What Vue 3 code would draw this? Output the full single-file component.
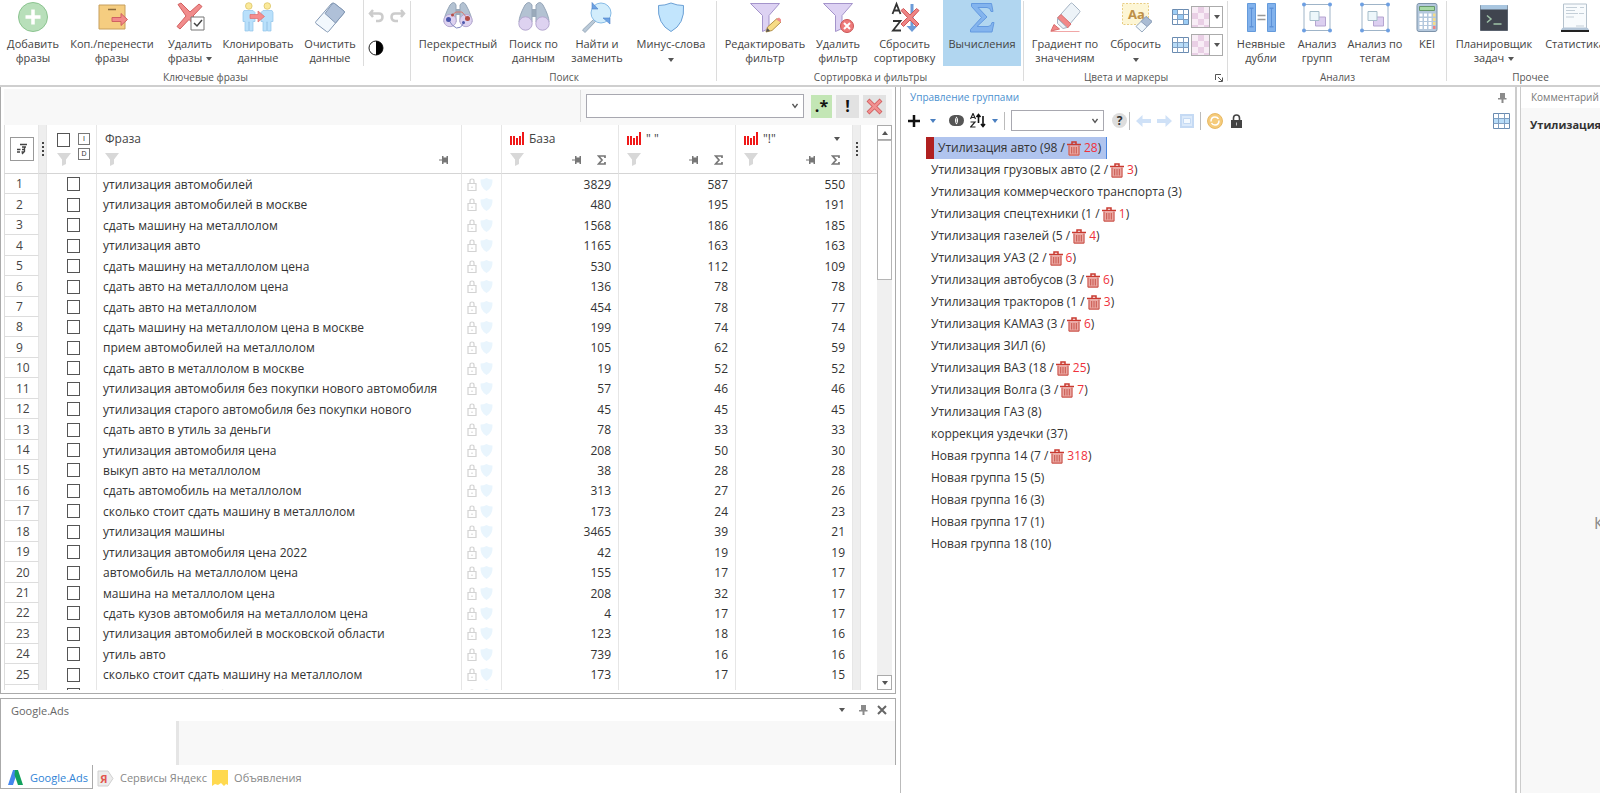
<script setup>
import { ref } from 'vue'

const icons = {
  add: '<circle cx="16" cy="16" r="14.5" fill="#b8dfba" stroke="#8cc490"/><path d="M16 8.500v15M8.500 16h15" stroke="#fff" stroke-width="3.500"/>',
  move: '<path d="M3 4h26v24H3z" fill="#f5cd80" stroke="#c79f5c"/><path d="M12 8.500h8" stroke="#8a6a3c" stroke-width="1.500"/><path d="M16 16.500h9v-4l6.500 6-6.500 6v-4h-9z" fill="#f28a8a" stroke="#cf6262"/>',
  remove: '<path d="M4 3.500 7 2l9 9 9-8 3 2.500-9 9.500 8 10-3 2.500-9-9-9 9.500-3-2.500 9-10.500z" fill="#f18c8c" stroke="#d25f5f"/><path d="M17 16h13v13H17z" fill="#fff" stroke="#777"/><path d="m20 22 3 3 5-6" fill="none" stroke="#444" stroke-width="1.500"/>',
  clone: '<g fill="#b9e0fb" stroke="#8fc3ea" stroke-width=".7"><path d="M2 9.500h9l2 2v9h-2V30H7.500v-9h-1v9H3v-9.500H1v-9z"/><path d="M21 9.500h9l1 2v9h-2V30h-3.500v-9h-1v9H21v-9.500h-2v-9z"/></g><g fill="#fbe99a" stroke="#dcc568" stroke-width=".8"><circle cx="6.800" cy="5" r="3.300"/><circle cx="25.300" cy="5" r="3.300"/></g><path d="M8 13.500h8v-3.500l6.500 5.500-6.500 5.500v-3.500H8z" fill="#f58d8d" stroke="#dd6b6b" stroke-width=".7"/>',
  eraser: '<path d="M20.500 2.500 30 10q1 1 0 2L14.500 30.500q-1 1-2 0L2 22.500q-1-1 0-2L17.500 2.500q1.500-1 3 0z" fill="#f2f8fd" stroke="#8297b3"/><path d="M20.500 2.500 30 10q1 1 0 2l-8.500 10L11 12.500l7-9.500q1.500-1 2.500-.5z" fill="#afc0d8" stroke="#8297b3"/>',
  binoc: '<path d="M13 8h6v8h-6z" fill="#9aaaba"/><path d="M7 4q4-5 7 0v17H1q0-6 6-17zM18 4q4-5 7 0 6 11 6 17H18z" fill="#b3c2d2" stroke="#95a5b8"/><circle cx="7.500" cy="22.500" r="6.700" fill="#ddd2f0" stroke="#b5a8d0"/><circle cx="24.500" cy="22.500" r="6.700" fill="#ddd2f0" stroke="#b5a8d0"/>',
  cross: '<path d="M13 8h6v6h-6z" fill="#9aaaba"/><path d="M8 4q4-5 6 0v17H2q0-6 6-17zM18 4q3-5 6 0 6 11 6 17H18z" fill="#b3c2d2" stroke="#95a5b8"/><circle cx="8" cy="19.500" r="6.200" fill="#ddd2f0" stroke="#b5a8d0"/><circle cx="24" cy="19.500" r="6.200" fill="#ddd2f0" stroke="#b5a8d0"/><path d="M10 14l4-3h6l5 6" fill="none" stroke="#d67a70"/><path d="M6 18q9 16 16 4" fill="none" stroke="#8088c0"/><circle cx="6.500" cy="18.500" r="2.500" fill="#4c57ac"/><circle cx="21.500" cy="21.500" r="1.500" fill="#4c57ac"/><circle cx="25.500" cy="17.500" r="2.500" fill="#b44d46"/><circle cx="10.500" cy="14" r="1.500" fill="#b44d46"/>',
  find: '<path d="m13 18 2 2L4 31.500 1.500 29z" fill="#b9c9d8" stroke="#9aabbb"/><circle cx="20" cy="12" r="10" fill="#d2edfc" stroke="#86bbe6"/><path d="M11 1.500v6.500h6zM22 17h7v6z" fill="#6da3e4" stroke="#4f82c8" stroke-width=".6"/>',
  shield: '<path d="M16 2q6 2.500 12.500 2.500Q30 23 16 30.500 2 23 3.500 4.500 10 4.500 16 2z" fill="#c2e5fd" stroke="#6ba0d5"/>',
  filterEdit: '<path d="M1.500 2.500h29L20 14.500v13l-6.500 3V14.500z" fill="#ddd2f3" stroke="#a494cb"/><path d="m17 31 1.500-5L28 17.500l4 3.500-9 8.500z" fill="#f7dc86" stroke="#b3924b"/><path d="m27 18.500 3-2 2 2v3z" fill="#ef8d8d"/><path d="m17 31 1.500-4 2.500 3z" fill="#555"/>',
  filterDel: '<path d="M1.500 2.500h29L20 14.500v13l-6.500 3V14.500z" fill="#ddd2f3" stroke="#a494cb"/><circle cx="25" cy="25" r="6.500" fill="#ee7a7a" stroke="#c95555"/><path d="m22 22 6 6m0-6-6 6" stroke="#fff" stroke-width="2"/>',
  sort: '<path d="M3.500 13 7.500 3l4 10M5 9.500h5M4 20h7.500L4 29.500h8" fill="none" stroke="#333" stroke-width="1.800"/><path d="M21.500 3h3v22h4L23 31l-5.500-6h4z" fill="#6c9bd8"/><path d="m12 9.500 2.500-2 6.500 6.500 6.500-6.500 2.500 2-6.500 7 6.500 6.500-2.500 2.500-6.500-6.500-6.500 6.500-2.500-2.500 6.500-6.500z" fill="#ee8585" stroke="#d05858"/>',
  sigma: '<path d="M5.500 2.500h20l1.500 8h-2q-.5-4-4-4h-9l9 9.500-10 9.500h11q3.500 0 4-4h2l-2 9.500H4.500v-2.500l11-12-10-11z" fill="#83b4ee" stroke="#649ae0"/>',
  marker: '<path d="M1.500 30.500h29" stroke="#f1a7a7"/><path d="M21.500 2.500q1-1 2 0l7 7q1 1 0 2L18 26.500 8.500 17z" fill="#edf3f8" stroke="#a4b3c3"/><path d="M12 13.500 22 23l-3.500 4L8.500 17z" fill="#f28888" stroke="#d86c6c"/><path d="M8.500 17.500 18 26.500l-4 1-5.500-5z" fill="#edf3f8" stroke="#a4b3c3"/><path d="M5 23.500 10.500 28 2 30z" fill="#f28888" stroke="#d86c6c"/>',
  reset: '<path d="M2.500 2.500h26v21h-26z" fill="#fdf6d5" stroke="#e8cd84" stroke-dasharray="2 1.500"/><text x="8" y="18" font-family="Noto Sans, sans-serif" font-size="13" font-weight="700" fill="#bd9047">Aa</text><path d="m26 15.500 6 5-10 10.500-6-5.500z" fill="#f0f7fc" stroke="#97a9be"/><path d="m26 15.500 6 5-5 5-6-5z" fill="#a9bcd4" stroke="#8ea1ba"/>',
  dup: '<path d="M2.500 2.500h8v28h-8zM22.500 2.500h8v28h-8z" fill="#82b2ec" stroke="#649adb"/><path d="M4.500 6.500h4v1.500h-1.500v17h1.500v1.500h-4v-1.500h1.500V8H4.500zM24.500 6.500h4v1.500h-1.500v17h1.500v1.500h-4v-1.500h1.500V8h-1.500z" fill="#5d91d8"/><path d="M12.500 14.500h8M12.500 18.500h8" stroke="#999" stroke-width="1.500"/>',
  group: '<path d="M3 3.500h26v26H3z" fill="#fff" stroke="#9fb4c8"/><path d="M14.500 16h10v9h-10z" fill="#dccff0" stroke="#b5a5d0"/><path d="M9 10.500h9v9H9z" fill="#edf7fb" stroke="#a5bdca"/><g fill="#6d9fe2"><circle cx="3" cy="3.500" r="2"/><circle cx="29" cy="3.500" r="2"/><circle cx="3" cy="29.500" r="2"/><circle cx="29" cy="29.500" r="2"/></g>',
  calc: '<rect x="6" y="2.500" width="20" height="28" rx="2" fill="#b4c8dd" stroke="#7d93aa"/><path d="M8.500 5.500h15v4h-15z" fill="#a7d9a5" stroke="#67986b"/><g fill="#fff"><path d="M8.500 12.500h3v3h-3zM13 12.500h3v3h-3zM17.500 12.500h3v3h-3zM8.500 17h3v3h-3zM13 17h3v3h-3zM17.500 17h3v3h-3zM8.500 21h3v3h-3zM13 21h3v3h-3zM17.500 21h3v3h-3zM8.500 25h3v3h-3zM13 25h3v3h-3zM17.500 25h3v3h-3z"/></g><path d="M22 12.500h2.500v3H22zM22 17h2.500v3H22zM22 21h2.500v3H22z" fill="#f5dc8a"/><path d="M22 25h2.500v3H22z" fill="#ee8484"/>',
  term: '<path d="M2.500 4.500h27v25h-27z" fill="#40454f" stroke="#5a626e"/><path d="M2.500 4h27v4.500h-27z" fill="#a9c6e0"/><path d="m9 14.500 4 3.500-4 3.500M15.500 23h8" fill="none" stroke="#9fc3a8" stroke-width="1.500"/>',
  stat: '<path d="M4.500 3h23v25.500h-23z" fill="#f8fbfd" stroke="#b5c2cd"/><path d="M7 6.500h11M7 9.500h9M7 12.500h12M7 16h8M21 6.500h4M20 12.500h5M17 25h8" stroke="#c4cfd8"/><path d="M2 30h28" stroke="#222" stroke-width="2"/><path d="M2 29q1-3 3-2.500h22q2-.5 3 2.500z" fill="#b4c6d8"/>',
}

const paneIcons = {
  pin: '<path d="M3 0h5v5h1.500v1.500H6.500V10h-2V6.500H1V5h2z" fill="#8b8b8b"/>',
  grid: '<path d="M.5.5h16v15H.5z" fill="#fff" stroke="#6a8bb0"/><path d="M1 5.500h15v5H1z" fill="#b8dcf8"/><path d="M.5 5.500h16M.5 10.500h16M5.500.5v15M11.500.5v15" stroke="#7f9fc2"/>',
  cells: '<path d="M.5.5h16v15H.5z" fill="#fff" stroke="#6a8bb0"/><path d="M1 1h5v5H1zM6 6h6v5H6zM12 11h4v4h-4z" fill="#9dcdf5"/><path d="M.5 5.500h16M.5 10.500h16M5.500.5v15M11.500.5v15" stroke="#7f9fc2"/>',
}

const ribbon = [
  { key: 'keys', title: 'Ключевые фразы', items: [['add', 'Добавить', 'фразы'], ['move', 'Коп./перенести', 'фразы'], ['remove', 'Удалить', 'фразы', true], ['clone', 'Клонировать', 'данные'], ['eraser', 'Очистить', 'данные']] },
  { key: 'search', title: 'Поиск', items: [['cross', 'Перекрестный', 'поиск'], ['binoc', 'Поиск по', 'данным'], ['find', 'Найти и', 'заменить'], ['shield', 'Минус-слова', '', true]] },
  { key: 'sorting', title: 'Сортировка и фильтры', items: [['filterEdit', 'Редактировать', 'фильтр'], ['filterDel', 'Удалить', 'фильтр'], ['sort', 'Сбросить', 'сортировку'], ['sigma', 'Вычисления', '']] },
  { key: 'colors', title: 'Цвета и маркеры', items: [['marker', 'Градиент по', 'значениям'], ['reset', 'Сбросить', '', true]] },
  { key: 'analysis', title: 'Анализ', items: [['dup', 'Неявные', 'дубли'], ['group', 'Анализ', 'групп'], ['group', 'Анализ по', 'тегам'], ['calc', 'KEI', '']] },
  { key: 'other', title: 'Прочее', items: [['term', 'Планировщик', 'задач', true], ['stat', 'Статистика', '']] },
]

const rows = [
  ['утилизация автомобилей', 3829, 587, 550],
  ['утилизация автомобилей в москве', 480, 195, 191],
  ['сдать машину на металлолом', 1568, 186, 185],
  ['утилизация авто', 1165, 163, 163],
  ['сдать машину на металлолом цена', 530, 112, 109],
  ['сдать авто на металлолом цена', 136, 78, 78],
  ['сдать авто на металлолом', 454, 78, 77],
  ['сдать машину на металлолом цена в москве', 199, 74, 74],
  ['прием автомобилей на металлолом', 105, 62, 59],
  ['сдать авто в металлолом в москве', 19, 52, 52],
  ['утилизация автомобиля без покупки нового автомобиля', 57, 46, 46],
  ['утилизация старого автомобиля без покупки нового', 45, 45, 45],
  ['сдать авто в утиль за деньги', 78, 33, 33],
  ['утилизация автомобиля цена', 208, 50, 30],
  ['выкуп авто на металлолом', 38, 28, 28],
  ['сдать автомобиль на металлолом', 313, 27, 26],
  ['сколько стоит сдать машину в металлолом', 173, 24, 23],
  ['утилизация машины', 3465, 39, 21],
  ['утилизация автомобиля цена 2022', 42, 19, 19],
  ['автомобиль на металлолом цена', 155, 17, 17],
  ['машина на металлолом цена', 208, 32, 17],
  ['сдать кузов автомобиля на металлолом цена', 4, 17, 17],
  ['утилизация автомобилей в московской области', 123, 18, 16],
  ['утиль авто', 739, 16, 16],
  ['сколько стоит сдать машину на металлолом', 173, 17, 15],
  ['утилизация автомобилей', 49, 17, 15],
]
const numCols = ['База', '" "', '"!"']

const groups = [
  ['Утилизация авто', 98, 28], ['Утилизация грузовых авто', 2, 3], ['Утилизация коммерческого транспорта', 3],
  ['Утилизация спецтехники', 1, 1], ['Утилизация газелей', 5, 4], ['Утилизация УАЗ', 2, 6],
  ['Утилизация автобусов', 3, 6], ['Утилизация тракторов', 1, 3], ['Утилизация КАМАЗ', 3, 6],
  ['Утилизация ЗИЛ', 6], ['Утилизация ВАЗ', 18, 25], ['Утилизация Волга', 3, 7], ['Утилизация ГАЗ', 8],
  ['коррекция уздечки', 37], ['Новая группа 14', 7, 318], ['Новая группа 15', 5], ['Новая группа 16', 3],
  ['Новая группа 17', 1], ['Новая группа 18', 10],
]
const selected = ref(0)
</script>

<template>
  <div class="app">
    <header class="ribbon">
      <section v-for="g in ribbon" :key="g.key" class="rgroup" :class="g.key">
        <div class="tools">
          <button v-for="(it, i) in g.items" :key="i" class="tool" :class="{ active: it[0] === 'sigma' }">
            <svg class="big" viewBox="0 0 32 32" v-html="icons[it[0]]"></svg>
            <span>{{ it[1] }}</span>
            <span>{{ it[2] }}<i v-if="it[3]" class="tri" :class="{ solo: !it[2] }"></i></span>
          </button>
          <div v-if="g.key === 'keys'" class="edit">
            <button class="mini" aria-label="Отменить"><svg width="16" height="14" viewBox="0 0 16 14"><path d="M5 1 2 4.500 5 8M2.500 4.500H11q3.500 0 3.500 3.500T11 12H8" fill="none" stroke="#ccc" stroke-width="2.500" /></svg></button>
            <button class="mini" aria-label="Повторить"><svg width="16" height="14" viewBox="0 0 16 14"><path d="m11 1 3 3.500L11 8m2.500-3.500H5Q1.500 4.500 1.500 8T5 12h3" fill="none" stroke="#ccc" stroke-width="2.500" /></svg></button>
            <button class="mini" aria-label="Контраст"><svg width="16" height="16" viewBox="0 0 16 16"><circle cx="8" cy="8" r="7" fill="#fff" stroke="#222" /><path d="M8 1a7 7 0 0 1 0 14z" /></svg></button>
          </div>
          <div v-if="g.key === 'colors'" class="swatches">
            <template v-for="k in ['cells', 'grid']" :key="k">
              <svg width="17" height="16" viewBox="0 0 17 16" v-html="paneIcons[k]"></svg>
              <button class="swatch" :aria-label="'Цвет ' + k"><b class="checker"></b><i class="tri"></i></button>
            </template>
          </div>
        </div>
        <div class="rtitle">{{ g.title }}
          <svg v-if="g.key === 'colors'" class="launch" width="8" height="8" viewBox="0 0 8 8"><path d="M.5 6V.5H6M3 3l4 4M7.500 3.500v4h-4" fill="none" stroke="#555" /></svg>
        </div>
      </section>
    </header>

    <main class="main">
      <div class="left">
        <section class="sheet">
          <div class="filterbar">
            <i class="vsep"></i>
            <select class="combo query" aria-label="Фильтр"><option></option></select>
            <button class="fbtn green">.*</button>
            <button class="fbtn">!</button>
            <button class="fbtn" aria-label="Сбросить фильтр"><svg width="17" height="17" viewBox="0 0 17 17"><path d="m2 2 13 13M15 2 2 15" stroke="#cf5757" stroke-width="4" /><path d="m2.500 2.500 12 12m0-12-12 12" stroke="#f19090" stroke-width="2.500" /></svg></button>
          </div>
          <div class="gridwrap">
            <div class="scrollarea">
              <table>
                <colgroup><col class="c-num"><col class="c-strip"><col class="c-chk"><col><col class="c-ico"><col class="c-val"><col class="c-val"><col class="c-val"><col class="c-strip"><col class="c-end"></colgroup>
                <thead>
                  <tr>
                    <th><button class="layout" aria-label="Столбцы"><svg width="12" height="12" viewBox="0 0 12 12"><path d="M4 1.500h7M6 4h4M1 6.500h3.500M6 6.500h3M1 9h3M8.500 4v4.500L6 11M5.500 9h2" fill="none" stroke="#444" stroke-width="1.300" /></svg></button></th>
                    <th class="strip"><i class="dots"></i></th>
                    <th>
                      <div class="hchk">
                        <input type="checkbox" aria-label="Выбрать все"><span class="flag">I</span>
                        <svg class="funnel" width="14" height="13" viewBox="0 0 14 13"><path d="M0 0h14L9 6.500V11l-4 2V6.500z" /></svg><span class="flag">D</span>
                      </div>
                    </th>
                    <th class="phrase">
                      <div class="hrow">Фраза</div>
                      <div class="hrow"><svg class="funnel" width="14" height="13" viewBox="0 0 14 13"><path d="M0 0h14L9 6.500V11l-4 2V6.500z" /></svg><svg class="hpin" width="10" height="8" viewBox="0 0 10 8"><path d="M0 3.500h3V0h1.500v1.500h3V0H9v8H7.500V6.500h-3V8H3V4.500H0z" /></svg></div>
                    </th>
                    <th></th>
                    <th v-for="(c, i) in numCols" :key="c" class="numh">
                      <div class="hrow"><svg width="14" height="13" viewBox="0 0 14 13"><path d="M1 4v9M4 4v9M7 6v7M10 4v9M13 0v13" stroke="#f01818" stroke-width="2" /></svg>{{ c }}<i v-if="i === 2" class="tri desc"></i></div>
                      <div class="hrow"><svg class="funnel" width="14" height="13" viewBox="0 0 14 13"><path d="M0 0h14L9 6.500V11l-4 2V6.500z" /></svg><svg class="hpin" width="10" height="8" viewBox="0 0 10 8"><path d="M0 3.500h3V0h1.500v1.500h3V0H9v8H7.500V6.500h-3V8H3V4.500H0z" /></svg><svg class="sum" width="9" height="10" viewBox="0 0 9 10"><path d="M8 3V1H1.500L5 5 1.500 9H8V7" fill="none" stroke="#777" stroke-width="1.700" /></svg></div>
                    </th>
                    <th class="strip"><i class="dots"></i></th>
                    <th></th>
                  </tr>
                </thead>
                <tbody>
                  <tr v-for="(r, i) in rows" :key="i">
                    <td class="idx">{{ i + 1 }}</td>
                    <td class="strip"></td>
                    <td class="chk"><input type="checkbox" :aria-label="r[0]"></td>
                    <td class="txt">{{ r[0] }}</td>
                    <td class="marks">
                      <svg width="26" height="13" viewBox="0 0 26 13"><path d="M1 5.500h8v7H1zM3 5.500v-2.500q0-2 2-2t2 2v2.500M5 8.500v1.500" fill="none" stroke="#d3d3d3" stroke-width="1.200" /><path d="M19.500 0q3 1.500 6 1.500.5 8-6 11.500-6.500-3.500-6-11.500 3 0 6-1.500z" fill="#e9f5fd" /></svg>
                    </td>
                    <td class="val">{{ r[1] }}</td>
                    <td class="val">{{ r[2] }}</td>
                    <td class="val">{{ r[3] }}</td>
                    <td class="strip"></td>
                    <td></td>
                  </tr>
                </tbody>
              </table>
            </div>
            <div class="scrollbar">
              <button aria-label="Вверх"><i class="tri up"></i></button>
              <div class="thumb"></div>
              <button class="down" aria-label="Вниз"><i class="tri"></i></button>
            </div>
          </div>
        </section>

        <section class="dock">
          <div class="dockbody">
            <div class="docktitle">Google.Ads
              <span class="dockctl">
                <i class="tri"></i>
                <svg width="10" height="10" viewBox="0 0 10 10" v-html="paneIcons.pin"></svg>
                <svg width="10" height="10" viewBox="0 0 10 10"><path d="m1 1 8 8m0-8L1 9" stroke="#666" stroke-width="2" /></svg>
              </span>
            </div>
            <div class="dockcontent"><div class="side"></div><div class="fill"></div></div>
          </div>
          <nav class="tabs">
            <button class="tab on"><svg width="17" height="17" viewBox="0 0 17 17"><path d="M6 1h5l-5 15H1z" fill="#4487ee" /><path d="M8 1h3l5 15h-5L7.500 6z" fill="#12a15d" /></svg>Google.Ads</button>
            <button class="tab"><svg width="17" height="17" viewBox="0 0 17 17"><path d="M1 1h10l5 7.500-5 7.500H1z" fill="#ececec" stroke="#d0d0d0" /><text x="3" y="13" font-family="Noto Sans, sans-serif" font-size="11" font-weight="700" fill="#e2574f">Я</text></svg>Сервисы Яндекс</button>
            <button class="tab"><svg width="17" height="17" viewBox="0 0 17 17"><path d="M1 0h16v15l-2-1-2 2-3-3-3 2-3-1-3 2z" fill="#ffd94f" /></svg>Объявления</button>
          </nav>
        </section>
      </div>

      <section class="tree">
        <div class="panetitle blue">Управление группами
          <svg width="10" height="10" viewBox="0 0 10 10" v-html="paneIcons.pin"></svg>
        </div>
        <div class="treebar">
          <button aria-label="Добавить группу"><svg width="12" height="12" viewBox="0 0 12 12"><path d="M6 0v12M0 6h12" stroke="#111" stroke-width="2.500" /></svg></button>
          <i class="tri blue-tri first"></i>
          <button aria-label="Объединить"><svg width="15" height="11" viewBox="0 0 15 11"><rect width="15" height="11" rx="5.500" fill="#555" /><path d="M7.500 1.500q-3 4 0 8 3-4 0-8z" fill="#fff" /><path d="M7.500 3v5" stroke="#999" /></svg></button>
          <button aria-label="Сортировка"><svg width="16" height="15" viewBox="0 0 16 15"><path d="m.5 6 2.500-5.500L5.500 6M1.500 4.500h3M.5 9h4.500L.5 14H5.500" fill="none" stroke="#222" stroke-width="1.200" /><path d="M8.500 10V2M6.500 4l2-2.500 2 2.500M13 3v10m-2-2 2 2.500 2-2.500" fill="none" stroke="#111" stroke-width="1.600" /></svg></button>
          <i class="tri blue-tri"></i>
          <i class="tsep"></i>
          <select class="combo find" aria-label="Поиск группы"><option></option></select>
          <span class="helpbox"><button class="help">?</button><i class="tsep"></i></span>
          <button aria-label="Назад"><svg width="15" height="12" viewBox="0 0 15 12"><path d="M0 6 6.500 0v4H15v4H6.500v4z" fill="#cfe1f7" /></svg></button>
          <button aria-label="Вперед"><svg width="15" height="12" viewBox="0 0 15 12"><path d="M15 6 8.500 0v4H0v4h8.500v4z" fill="#cfe1f7" /></svg></button>
          <button class="spaced" aria-label="Окно"><svg width="14" height="14" viewBox="0 0 14 14"><path d="M1 1h12v12H1z" fill="#dceafa" stroke="#c5daf4" stroke-width="2" /><path d="M3.500 4.500h7v5h-7z" fill="#f5faff" stroke="#c5daf4" /></svg></button>
          <i class="tsep"></i>
          <button aria-label="Обновить"><svg width="16" height="16" viewBox="0 0 16 16"><circle cx="8" cy="8" r="7.500" fill="#f5cb7b" stroke="#e3ae50" stroke-width=".8" /><path d="M4 8.500Q4 4 8 4q2.500 0 3.500 2M12 7.500Q12 12 8 12q-2.500 0-3.500-2" fill="none" stroke="#fff" stroke-width="1.500" /></svg></button>
          <button class="spaced" aria-label="Заблокировать"><svg width="11" height="14" viewBox="0 0 11 14"><path d="M2.500 6V4q0-3 3-3t3 3v2" fill="none" stroke="#444" stroke-width="1.600" /><path d="M0 6h11v8H0z" fill="#444" /><path d="M5.500 8.500v3" stroke="#bbb" /></svg></button>
          <svg class="gridico" width="17" height="16" viewBox="0 0 17 16" v-html="paneIcons.grid"></svg>
        </div>
        <ul class="nodes">
          <li v-for="(n, i) in groups" :key="n[0]" :class="{ sel: i === selected }" @click="selected = i">
            <span>{{ n[0] }} ({{ n[1] }}<template v-if="n[2]">&nbsp;/</template></span>
            <template v-if="n[2]">
              <svg width="14" height="15" viewBox="0 0 14 15"><path d="M1.500 4.500h11V14q0 1-1 1h-9q-1 0-1-1z" fill="#eba8a2" /><path d="M0 3.500h14M5 3V1h4v2" fill="none" stroke="#c93a30" stroke-width="1.500" /><path d="M2 4.500V14h10V4.500M4.700 6v6.500M7 6v6.500M9.300 6v6.500" fill="none" stroke="#c8544c" /></svg>
              <span class="del">{{ n[2] }}</span>
            </template><span>)</span>
          </li>
        </ul>
      </section>

      <section class="comments">
        <div class="panetitle">Комментарий</div>
        <div class="cbody"><strong>Утилизация</strong><p>К</p></div>
      </section>
    </main>
  </div>
</template>

<style>
body { overflow: hidden; }
</style>

<style scoped>
.app, .app * { box-sizing: border-box; }
.app { height: 100vh; display: flex; flex-direction: column; overflow: hidden; background: #fff; color: #444; font: 12px/14px "Open Sans", "Noto Sans", sans-serif; }
button { border: 0; background: none; padding: 0; margin: 0; color: inherit; font: inherit; }
svg { display: block; flex: none; }
.tri { display: inline-block; flex: none; border: 3px solid transparent; border-top: 4px solid #555; border-bottom: 0; }

.ribbon { flex: none; display: flex; border-bottom: 2px solid #cfcfcf; height: 87px; overflow: hidden; background: #fff; font-size: 11px; }
.rgroup { flex: none; position: relative; height: 85px; }
.rgroup::after { content: ""; position: absolute; right: 0; top: 1px; height: 80px; border-right: 1px solid #dcdcdc; }
.keys { width: 411px; }
.search { width: 306px; }
.sorting { width: 307px; }
.colors { width: 204px; }
.analysis { width: 219px; }
.other { width: 167px; }
.tools { display: grid; height: 66px; padding-left: 3px; }
.keys .tools { grid-template-columns: 60px 98px 58px 78px 66px 48px; }
.search .tools { grid-template-columns: 88px 63px 64px 84px; }
.sorting .tools { grid-template-columns: 90px 56px 77px 78px; }
.colors .tools { grid-template-columns: 76px 65px 58px; }
.analysis .tools { grid-template-columns: 60px 52px 64px 40px; }
.other .tools { grid-template-columns: 88px 74px; }
.tool { display: flex; flex-direction: column; align-items: center; padding-top: 1px; white-space: nowrap; }
.tool span { height: 14px; line-height: 14px; }
.big { width: 32px; height: 32px; margin-bottom: 4px; }
.tool .tri { margin: 0 0 1px 4px; }
.tool .tri.solo { margin: 0; }
.active { background: #b1d6f0; }
.edit { display: grid; grid-template-columns: 22px 22px; grid-template-rows: 32px 32px; align-items: center; border-left: 1px solid #dcdcdc; padding-left: 4px; }
.mini { width: 16px; }
.swatches { display: grid; grid-template-columns: 17px 32px; grid-auto-rows: 22px; gap: 6px 2px; align-items: center; padding: 6px 0 0 4px; }
.swatch { height: 22px; border: 1px solid #ababab; display: flex; align-items: center; gap: 4px; }
.checker { width: 18px; height: 20px; border-right: 1px solid #ababab; background: repeating-conic-gradient(#e9cfe5 0 25%, #f8edf6 0 50%) 0 0 / 12px 12px; }
.rtitle { height: 18px; line-height: 22px; font-size: 10px; text-align: center; color: #555; position: relative; }
.launch { position: absolute; right: 5px; top: 8px; }

.main { flex: 1; display: flex; min-height: 0; }
.left { flex: 0 1 896px; display: flex; flex-direction: column; min-width: 0; padding-bottom: 4px; }
.sheet { flex: 1; min-height: 0; display: flex; flex-direction: column; border: 1px solid #aaa; border-top: 0; padding: 2px 3px 3px; }
.filterbar { flex: none; height: 36px; background: #f8f8f8; display: flex; align-items: center; justify-content: flex-end; padding: 0 6px 2px 0; gap: 4px; }
.vsep { width: 1px; height: 32px; background: #ddd; margin-right: 1px; }
.combo { appearance: none; border: 1px solid #a8a8b0; border-radius: 0; background: #fff url("data:image/svg+xml,%3Csvg xmlns='http://www.w3.org/2000/svg' width='6' height='6'%3E%3Cpath d='M.5 1 3 4.500 5.500 1' fill='none' stroke='%23555' stroke-width='1.300'/%3E%3C/svg%3E") no-repeat right 5px center; }
.query { width: 218px; height: 24px; margin-right: 3px; }
.fbtn { width: 23px; height: 23px; background: #e2e2e2; color: #111; font-weight: 700; font-size: 16px; line-height: 23px; display: flex; align-items: center; justify-content: center; }
.green { background: #c3e6b5; width: 21px; }
.gridwrap { flex: 1; min-height: 0; display: flex; }
.scrollarea { flex: 1; min-width: 0; overflow: hidden; }
table { width: 100%; table-layout: fixed; border-collapse: separate; border-spacing: 0; }
.c-num { width: 35px; }
.c-strip { width: 8px; }
.c-chk { width: 50px; }
.c-ico { width: 40px; }
.c-val { width: 117px; }
.c-end { width: 16px; }
th, td { padding: 0; border-right: 1px solid #e6e6e6; font-weight: 400; }
th { height: 49px; border-bottom: 1px solid #d5d5d5; vertical-align: middle; text-align: left; }
th:first-child, td:first-child { border-left: 1px solid #ddd; }
th:last-child, td:last-child { border-right: 0; }
.strip { background: #eee; }
.dots { display: block; width: 2px; height: 14px; margin-left: 3px; background: repeating-linear-gradient(#444 0 2px, transparent 2px 4px); }
.layout { width: 24px; height: 24px; border: 1px solid #999; display: flex; align-items: center; justify-content: center; margin: 0 auto; }
.hchk { display: grid; grid-template: 14px 18px / 14px 12px; gap: 1px 7px; padding-left: 10px; align-items: start; }
.flag { width: 12px; height: 12px; border: 1px solid #777; font: 7px/10px "Liberation Sans", sans-serif; text-align: center; color: #333; }
.funnel { fill: #d8d8d8; }
.hchk .funnel { align-self: end; }
.hpin { fill: #777; margin-left: auto; }
.hrow { height: 21px; display: flex; align-items: center; padding: 0 12px 0 8px; gap: 5px; }
.sum { margin-left: 10px; }
.desc { margin-left: auto; }
input[type="checkbox"] { appearance: none; display: block; margin: 0; width: 13px; height: 14px; border: 1px solid #555; background: #fff; }
td { height: 20px; line-height: 19px; }
tbody tr:nth-child(7n + 2) td, tbody tr:nth-child(7n + 4) td, tbody tr:nth-child(7n + 6) td { height: 21px; }
.idx { padding-left: 11px; border-bottom: 1px solid #ddd; }
.chk input { margin-left: 20px; }
.txt { padding-left: 6px; white-space: nowrap; overflow: hidden; color: #333; }
.marks svg { margin-left: 5px; }
.val { text-align: right; padding-right: 7px; color: #333; }
.scrollbar { width: 15px; flex: none; background: #f0f0f0; display: flex; flex-direction: column; }
.scrollbar button { height: 15px; border: 1px solid #aaa; background: #fff; display: flex; align-items: center; justify-content: center; }
.thumb { height: 140px; border: 1px solid #b5b5b5; background: #fff; }
.scrollbar .down { margin-top: auto; }
.up { transform: rotate(180deg); }

.dock { flex: none; margin-top: 4px; font-size: 11px; }
.dockbody { border: 1px solid #aaa; border-bottom: 0; }
.docktitle { height: 22px; line-height: 24px; padding: 0 8px 0 10px; display: flex; justify-content: space-between; color: #666; }
.dockctl { display: flex; align-items: center; gap: 9px; }
.dockctl .tri { margin-right: 4px; }
.dockcontent { height: 44px; display: flex; }
.side { width: 178px; border-right: 3px solid #e5e5e5; }
.fill { flex: 1; background: #f8f8f8; }
.tabs { display: flex; height: 24px; }
.tab { display: flex; align-items: center; gap: 6px; padding: 2px 0 0 4px; color: #888; }
.tab.on { color: #2f83d6; border: 1px solid #aaa; border-top: 0; padding: 2px 4px 0 6px; }

.tree { flex: 1; min-width: 0; margin-left: 4px; border: 1px solid #bbb; border-width: 0 2px 0 1px; border-right-color: #ccc; }
.panetitle { height: 21px; line-height: 23px; padding: 0 8px 0 9px; display: flex; justify-content: space-between; align-items: center; font-size: 10px; color: #777; white-space: nowrap; }
.blue { color: #4a90cf; }
.treebar { display: flex; align-items: center; height: 25px; padding: 0 5px 0 7px; gap: 6px; }
.blue-tri { border-top-color: #4a7fc0; }
.blue-tri.first { margin: 0 7px 0 4px; }
.tsep { width: 1px; height: 18px; background: #bbb; }
.find { width: 93px; height: 21px; }
.helpbox { display: flex; align-items: center; gap: 2px; padding-left: 2px; }
.help { width: 15px; height: 15px; border-radius: 50%; background: #ddd; color: #333; font-weight: 700; line-height: 15px; }
.spaced { margin-left: 2px; }
.gridico { margin-left: auto; }
.nodes { list-style: none; margin: 4px 0 0; padding: 0 0 0 25px; color: #333; }
.nodes li { display: flex; width: max-content; height: 22px; align-items: center; padding-left: 5px; white-space: nowrap; }
.nodes li.sel { background: #b0c4ee; border-left: 8px solid #b02020; border-right: 1px solid #4a86e0; padding: 0 5px 0 4px; }
.nodes svg { margin: 0 3px 0 2px; }
.del { color: #f0323c; }

.comments { flex: none; width: 80px; margin-left: 3px; overflow: hidden; display: flex; flex-direction: column; border-left: 1px solid #ccc; }
.comments .panetitle { padding: 0 10px; flex: none; }
.cbody { flex: 1; background: #f8f8f8; position: relative; white-space: nowrap; }
.cbody strong { display: block; padding: 10px 9px; font-size: 11px; color: #333; }
.cbody p { position: absolute; left: 73px; top: 404px; margin: 0; font-size: 16px; line-height: 22px; color: #888; }
</style>
